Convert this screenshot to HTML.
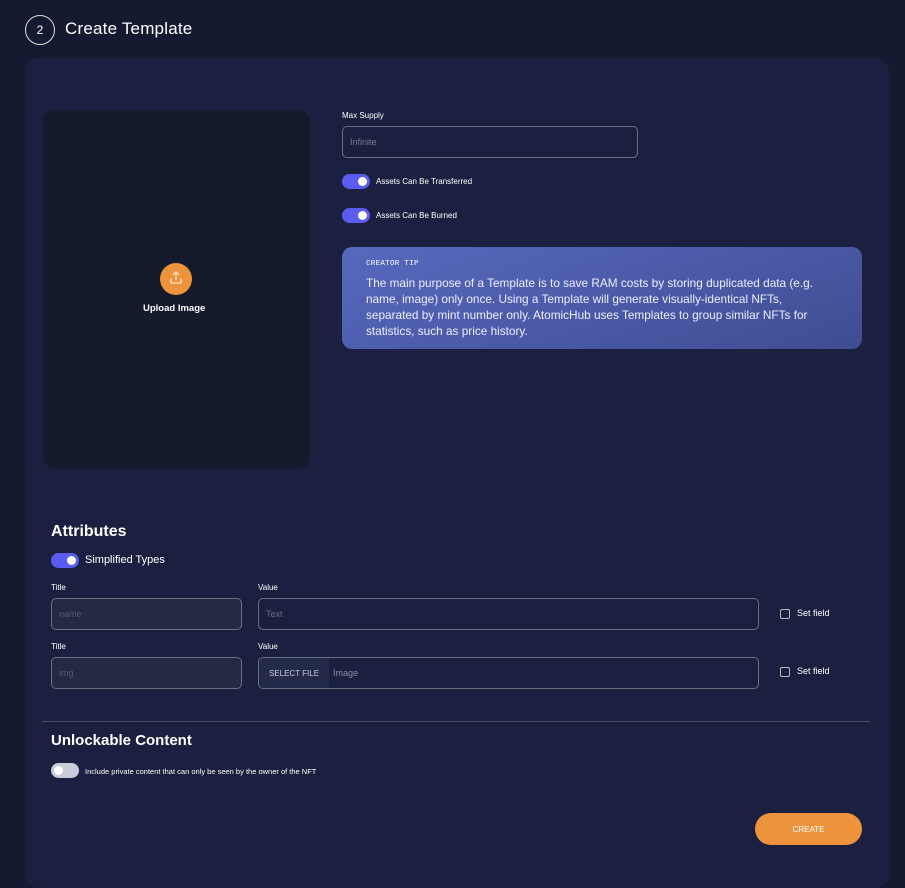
<!DOCTYPE html>
<html><head><meta charset="utf-8"><style>
*{box-sizing:border-box;margin:0;padding:0}
body{width:905px;height:864px;overflow:hidden;background:#161a30;font-family:"Liberation Sans",sans-serif;color:#fff;position:relative}
.abs{position:absolute}
.circle{left:25px;top:15px;width:30px;height:30px;border:1.5px solid #ddd;border-radius:50%;font-size:12px;display:flex;align-items:center;justify-content:center}
.h1{left:65px;top:19px;font-size:17px;letter-spacing:.2px}
.card{left:25px;top:58px;width:864px;height:830px;background:#1c2040;border-radius:14px}
.up{left:43px;top:110px;width:267px;height:359px;background:#151a2d;border-radius:12px}
.ic{left:160px;top:263px;width:32px;height:32px;border-radius:50%;background:#ec933c}
.lbl{font-size:8px;color:#fff}
.inp{border:1px solid #6b6f82;border-radius:5px;font-size:9px;color:#777b8e;padding-left:7px;display:flex;align-items:center}
.tg{width:28px;height:15px;border-radius:8px;background:#5a5cf0}
.tg::after{content:"";position:absolute;right:3px;top:3px;width:9px;height:9px;border-radius:50%;background:#fff}
.tg.off{background:#c8ccd8}
.tg.off::after{left:3px;right:auto}
.tip{left:342px;top:247px;width:520px;height:102px;border-radius:10px;background:linear-gradient(160deg,#5769be,#3f4d92)}
.cb{width:10px;height:10px;border:1px solid #bbb;border-radius:2px}
</style></head><body>
<div class="abs circle">2</div>
<div class="abs h1">Create Template</div>
<div class="abs card"></div>
<div class="abs up"></div>
<div class="abs ic"><svg width="32" height="32" viewBox="0 0 32 32"><path d="M11 15v5h10v-5" fill="none" stroke="#f7d6b0" stroke-width="1.5"/><path d="M16 17v-7M13 12l3-3 3 3" fill="none" stroke="#f7d6b0" stroke-width="1.5"/></svg></div>
<div class="abs" style="left:143px;top:303px;font-size:9.5px;font-weight:bold">Upload Image</div>

<div class="abs lbl" style="left:342px;top:111px">Max Supply</div>
<div class="abs inp" style="left:342px;top:126px;width:296px;height:32px">Infinite</div>
<div class="abs tg" style="left:342px;top:174px"></div>
<div class="abs lbl" style="left:376px;top:177px">Assets Can Be Transferred</div>
<div class="abs tg" style="left:342px;top:208px"></div>
<div class="abs lbl" style="left:376px;top:211px">Assets Can Be Burned</div>
<div class="abs tip"></div>
<div class="abs" style="left:366px;top:260px;font-size:7.5px;font-family:'Liberation Mono',monospace;letter-spacing:.3px">CREATOR TIP</div>
<div class="abs" style="left:366px;top:275px;width:490px;font-size:11.8px;line-height:16px;color:#eef;white-space:nowrap">The main purpose of a Template is to save RAM costs by storing duplicated data (e.g.<br>name, image) only once. Using a Template will generate visually-identical NFTs,<br>separated by mint number only. AtomicHub uses Templates to group similar NFTs for<br>statistics, such as price history.</div>

<div class="abs" style="left:51px;top:523px;font-size:16px;font-weight:bold">Attributes</div>
<div class="abs tg" style="left:51px;top:553px"></div>
<div class="abs" style="left:85px;top:554px;font-size:11px">Simplified Types</div>
<div class="abs lbl" style="left:51px;top:583px">Title</div>
<div class="abs lbl" style="left:258px;top:583px">Value</div>
<div class="abs inp" style="left:51px;top:598px;width:191px;height:32px;background:#252942;color:#555a70">name</div>
<div class="abs inp" style="left:258px;top:598px;width:501px;height:32px;color:#666a80">Text</div>
<div class="abs cb" style="left:780px;top:609px"></div>
<div class="abs" style="left:797px;top:608px;font-size:9px">Set field</div>
<div class="abs lbl" style="left:51px;top:642px">Title</div>
<div class="abs lbl" style="left:258px;top:642px">Value</div>
<div class="abs inp" style="left:51px;top:657px;width:191px;height:32px;background:#252942;color:#555a70">img</div>
<div class="abs inp" style="left:258px;top:657px;width:501px;height:32px;padding-left:0;color:#888ca0;overflow:hidden"><span style="background:#242a4a;height:100%;width:70px;display:flex;align-items:center;justify-content:center;color:#ccd;font-size:8px;margin-right:4px">SELECT FILE</span>Image</div>
<div class="abs cb" style="left:780px;top:667px"></div>
<div class="abs" style="left:797px;top:666px;font-size:9px">Set field</div>

<div class="abs" style="left:42px;top:721px;width:828px;height:1px;background:#4a4e66"></div>
<div class="abs" style="left:51px;top:732px;font-size:15px;font-weight:bold">Unlockable Content</div>
<div class="abs tg off" style="left:51px;top:763px"></div>
<div class="abs lbl" style="left:85px;top:767px;font-size:7.5px">Include private content that can only be seen by the owner of the NFT</div>
<div class="abs" style="left:755px;top:813px;width:107px;height:32px;border-radius:16px;background:#ec933c;font-size:8px;display:flex;align-items:center;justify-content:center">CREATE</div>
</body></html>
